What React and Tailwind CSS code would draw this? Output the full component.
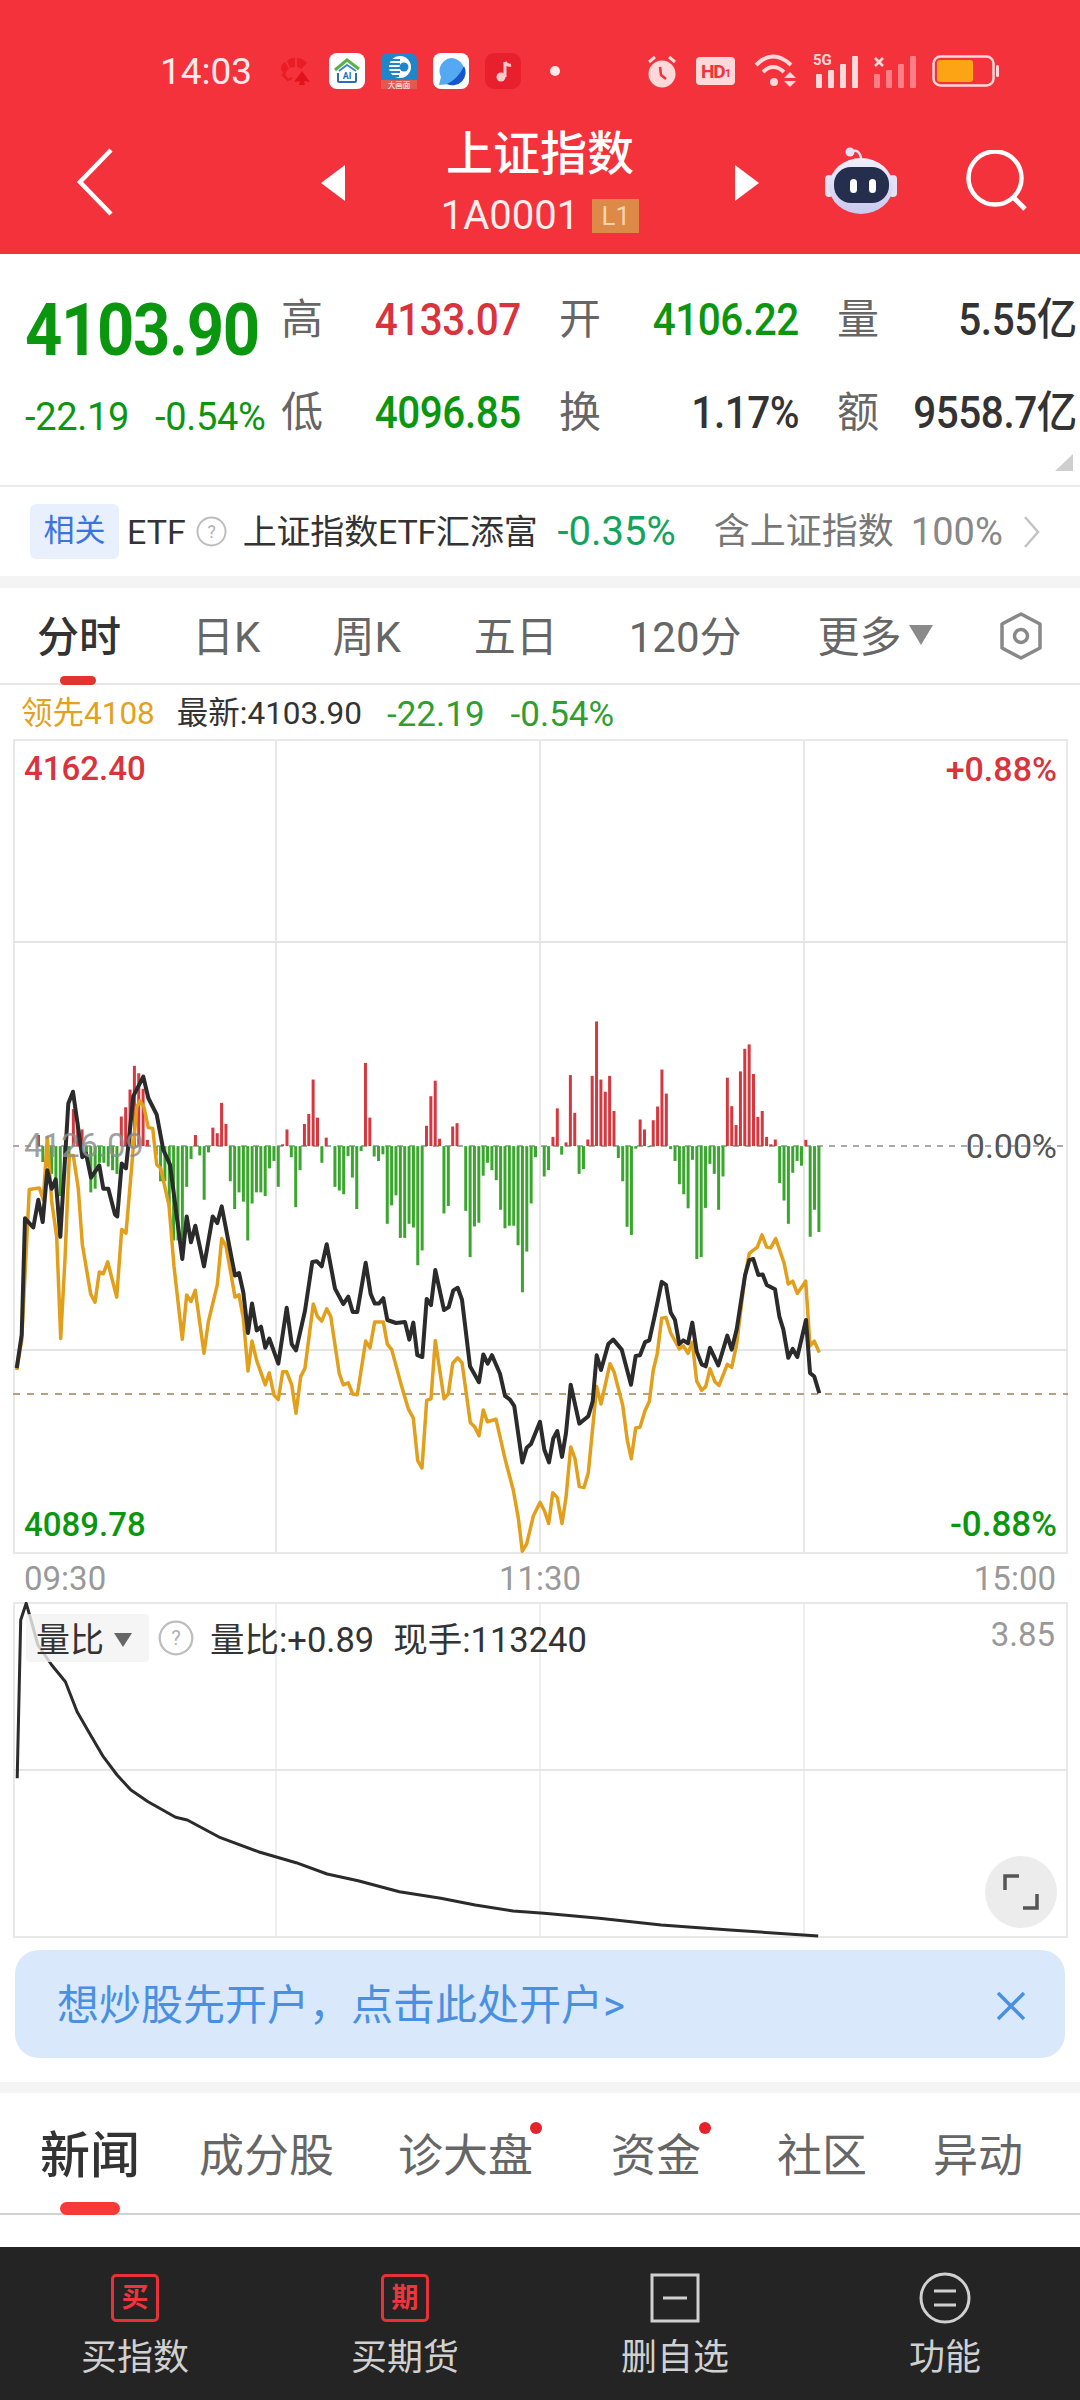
import React from "react";

const black3 = [[50,995],[65,905],[75,590],[100,615],[115,540],[128,600],[142,460],[155,510],[167,485],[181,640],[205,280],[219,248],[247,425],[258,415],[273,480],[298,447],[310,510],[325,510],[345,580],[352,585],[365,442],[378,455],[400,260],[430,207],[445,265],[470,310],[490,405],[510,445],[547,700],[560,585],[573,655],[586,610],[612,720],[638,585],[652,603],[665,558],[705,745],[717,738],[730,790],[744,900],[756,820],[770,893],[783,883],[796,940],[808,915],[835,983],[860,832],[875,930],[888,947],[915,840],[937,708],[950,706],[965,720],[980,660],[1005,780],[1030,822],[1045,802],[1058,843],[1072,843],[1097,710],[1112,795],[1124,820],[1137,820],[1150,806],[1162,865],[1188,873]];
const black4 = [[15,870],[28,918],[40,872],[52,960],[67,965],[80,808],[93,825],[106,730],[132,838],[146,830],[160,785],[173,778],[186,810],[210,990],[237,1033],[250,958],[263,983],[276,960],[300,1010],[315,1070],[330,1080],[343,1098],[367,1250],[380,1210],[393,1200],[420,1140],[433,1215],[447,1250],[460,1185],[472,1165],[486,1235],[498,1170],[512,1040],[538,1145],[565,1125],[578,1085],[590,960],[603,1000],[625,930],[640,918],[665,945],[693,1040],[707,962],[720,960],[735,925],[748,920],[765,850],[785,762],[798,770],[812,845],[825,865],[838,930],[850,920],[864,928],[877,872],[890,950],[905,985],[917,990],[930,940],[955,988],[982,907],[995,945],[1010,890],[1035,745],[1048,703],[1060,700],[1075,743],[1088,742],[1100,770],[1125,782],[1138,855],[1150,890],[1165,967],[1178,943],[1192,965],[1218,865],[1230,1008],[1243,1018],[1258,1063]];
const orange3 = [[50,1000],[65,920],[88,512],[118,508],[130,540],[142,372],[155,545],[170,640],[182,915],[195,700],[208,420],[220,420],[235,510],[247,660],[272,795],[285,817],[298,735],[310,740],[323,708],[350,803],[365,620],[378,630],[395,450],[410,290],[420,272],[432,290],[445,345],[458,347],[470,445],[482,455],[507,555],[522,720],[547,917],[560,797],[573,815],[586,785],[612,955],[625,870],[652,770],[665,645],[678,665],[705,803],[717,797],[730,860],[744,1003],[756,922],[770,975],[796,1040],[808,1008],[822,1068],[835,1080],[848,1005],[860,1005],[875,1040],[888,1117],[902,1018],[915,995],[940,822],[952,855],[965,868],[980,835],[992,855],[1018,1010],[1030,1040],[1045,1035],[1058,1065],[1072,1067],[1097,922],[1110,940],[1124,870],[1150,870],[1162,930],[1175,945]];
const orange4 = [[5,1045],[25,1105],[40,1130],[53,1245],[66,1265],[80,1082],[93,1078],[106,920],[132,1078],[145,1065],[158,982],[173,967],[186,980],[211,1142],[225,1155],[237,1178],[250,1108],[262,1140],[288,1133],[315,1240],[340,1325],[355,1400],[367,1490],[380,1470],[400,1395],[420,1358],[433,1380],[446,1415],[458,1332],[472,1345],[486,1415],[498,1345],[512,1208],[525,1240],[538,1315],[552,1318],[565,1278],[590,1045],[603,1092],[630,983],[642,1005],[668,1095],[682,1190],[694,1240],[707,1157],[720,1155],[735,1110],[748,1085],[760,1000],[772,955],[785,860],[798,858],[812,900],[838,943],[850,935],[864,955],[877,925],[890,1030],[905,1055],[917,1045],[930,997],[945,1032],[957,1042],[982,985],[995,993],[1010,930],[1035,745],[1048,685],[1072,668],[1086,635],[1100,668],[1112,670],[1127,645],[1152,710],[1165,768],[1178,760],[1192,793],[1217,760],[1230,935],[1243,922],[1258,953]];
const barTops = [395,395,395,395,395,365,438,450,470,500,530,470,430,295,330,350,420,520,510,440,440,450,460,470,315,290,242,178,198,240,378,395,420,490,490,560,650,650,650,505,430,365,420,540,412,345,360,278,335,490,565,520,545,650,550,520,520,530,455,435,505,390,350,425,560,460,335,308,215,318,440,372,395,505,515,525,422,480,565,408,170,318,423,435,417,605,555,528,643,643,605,615,717,677,340,260,218,375,577,557,342,333,395,570,695,612,602,475,440,460,487,567,617,610,610,663,790,680,550,425,395,477,460,370,293,418,385,203,305,470,457,377,205,58,215,248,205,300,427,490,613,635,402,323,350,398,325,288,188,253,403,435,498,525,563,432,700,695,562,443,470,567,477,210,287,338,193,132,120,200,316,300,370,390,377,495,542,605,467,435,448,378,640,567,627];
const curve = [[25,625],[30,150],[38,100],[45,150],[55,225],[75,285],[95,335],[112,425],[130,490],[150,560],[170,615],[190,660],[215,695],[255,742],[272,750],[320,803],[375,845],[400,860],[430,878],[475,912],[520,932],[580,965],[640,985],[690,1005],[745,1023],[790,1030],[870,1045],[960,1065],[1060,1080],[1188,1098]];

const yz = (z) => 1000 + z / 2.703;
const pts = (a3, a4) =>
  [...a3.map(([x, y]) => `${(x / 3).toFixed(1)},${yz(y).toFixed(1)}`), ...a4.map(([x, y]) => `${(400 + x / 3).toFixed(1)},${yz(y).toFixed(1)}`)].join(" ");
const curvePts = curve.map(([x, y]) => `${(x / 1.452).toFixed(1)},${(1570 + y / 3).toFixed(1)}`).join(" ");

function MainChartSvg() {
  return (
    <svg className="absolute left-[-2px] top-[-2px]" width="1055" height="815" viewBox="13 739 1055 815" fill="none">
      {[276, 540, 804].map((x) => <line key={x} x1={x} x2={x} y1="739" y2="1553" stroke="#e8e8e8" strokeWidth="2" />)}
      {[942, 1350].map((y) => <line key={y} x1="13" x2="1068" y1={y} y2={y} stroke="#e4e4e4" strokeWidth="2" />)}
      <line x1="13" x2="1068" y1="1146" y2="1146" stroke="#aaaaaa" strokeWidth="2" strokeDasharray="6 6" />
      <line x1="13" x2="1068" y1="1394" y2="1394" stroke="#b5a27c" strokeWidth="2" strokeDasharray="7 7" />
      {barTops.map((t, i) => {
        const x = (50 + 13.08 * i) / 3;
        const up = t < 395;
        if (t === 395) return null;
        const top = yz(Math.min(t, 395));
        const bot = yz(Math.max(t, 395));
        return <rect key={i} x={x - 1.5} y={top} width="3" height={bot - top} fill={up ? "#d5383f" : "#3ba62e"} />;
      })}
      <polyline points={pts(orange3, orange4)} stroke="#e29f1c" strokeWidth="3.5" strokeLinejoin="round" />
      <polyline points={pts(black3, black4)} stroke="#2b2b2b" strokeWidth="4" strokeLinejoin="round" />
    </svg>
  );
}

function SubChartSvg() {
  return (
    <svg className="absolute left-[-2px] top-[-2px]" width="1055" height="336" viewBox="13 1602 1055 336" fill="none">
      {[276, 540, 804].map((x) => <line key={x} x1={x} x2={x} y1="1602" y2="1938" stroke="#e8e8e8" strokeWidth="1.5" />)}
      <line x1="13" x2="1068" y1="1770" y2="1770" stroke="#e6e6e6" strokeWidth="2" />
      <polyline points={curvePts} stroke="#2b2b2b" strokeWidth="3" strokeLinejoin="round" />
    </svg>
  );
}

function Poker() {
  return (
    <svg width="34" height="30" viewBox="0 0 34 30" fill="none">
      <path d="M3 14 Q2 9 7 6 L11 13 Q7 15 8 20Z M9 5 Q13 1 17 2 L17 11 Q14 11 12 12Z M19 2 Q25 2 29 7 L23 13 Q21 11 19 11Z" fill="#ea1c24" />
      <path d="M24 15 L32 26 L26 25 L27 29 L21 29 L22 25 L16 26Z" fill="#e4111b" />
      <path d="M4 18 L10 24 L14 22" stroke="#ea1c24" strokeWidth="2.5" />
    </svg>
  );
}
function AiHouse() {
  return (
    <svg width="36" height="36" viewBox="0 0 36 36" fill="none">
      <rect width="36" height="36" rx="8" fill="#fff" />
      <path d="M6 17 L18 7 L30 16" stroke="#5bb04a" strokeWidth="3" />
      <path d="M10 18 L18 12 L27 18" stroke="#3f8ac4" strokeWidth="2" />
      <path d="M9 20 V28 Q9 29 10 29 H26 Q27 29 27 28 V20" stroke="#2a6fb0" strokeWidth="2" />
      <text x="18" y="26" textAnchor="middle" fontSize="9" fontWeight="700" fill="#2a6fb0">AI</text>
    </svg>
  );
}
function BlueApp() {
  return (
    <svg width="36" height="36" viewBox="0 0 36 36" fill="none">
      <rect width="36" height="36" rx="7" fill="#1f86cc" />
      <circle cx="19" cy="14" r="11" fill="#fff" />
      <path d="M8 7 H19 M8 11 H19 M8 15 H19 M8 19 H19 M10 23 H18" stroke="#1f86cc" strokeWidth="2" />
      <circle cx="23" cy="14" r="4.5" fill="#1f86cc" />
      <rect x="0" y="27" width="36" height="9" fill="#e4584f" />
      <text x="18" y="35" textAnchor="middle" fontSize="7.5" fill="#fff">大画面</text>
    </svg>
  );
}
function Planet() {
  return (
    <svg width="36" height="36" viewBox="0 0 36 36" fill="none">
      <rect width="36" height="36" rx="8" fill="#fff" />
      <path d="M18 5 A13 13 0 0 1 31 18 A13 13 0 0 1 18 31 L6 32 L8 24 A13 13 0 0 1 18 5Z" fill="#55a8f2" />
      <path d="M31 13 A13 13 0 0 1 14 31 Q25 26 31 13Z" fill="#1556cc" />
    </svg>
  );
}
function MusicApp() {
  return (
    <svg width="36" height="36" viewBox="0 0 36 36" fill="none">
      <rect width="36" height="36" rx="9" fill="#e8202e" />
      <path d="M20 9 V24" stroke="#ffc9cb" strokeWidth="3" />
      <path d="M20 9 Q22 13 26 12" stroke="#ffc9cb" strokeWidth="3" />
      <circle cx="16" cy="24" r="4.5" fill="#ffc9cb" />
    </svg>
  );
}
function Alarm() {
  return (
    <svg width="34" height="34" viewBox="0 0 34 34" fill="none">
      <circle cx="17" cy="20" r="13.5" fill="#ffd9da" />
      <path d="M4 8 L10 3 M30 8 L24 3" stroke="#ffd9da" strokeWidth="3" />
      <path d="M15 13 L16 21 L21 25" stroke="#f3323b" strokeWidth="2.5" />
    </svg>
  );
}
function Hd() {
  return (
    <div className="flex h-[28px] w-[39px] items-center justify-center rounded-[4px] bg-[#ffd9da] text-[19px] font-bold leading-none tracking-[-1px] text-[#f3323b]">
      HD<span className="mt-[5px] text-[11px]">1</span>
    </div>
  );
}
function Wifi() {
  return (
    <svg width="46" height="34" viewBox="0 0 46 34" fill="none">
      <path d="M2 11 Q19 -6 37 11" stroke="#ffd9da" strokeWidth="4" />
      <path d="M9 18 Q19 8 30 18" stroke="#ffd9da" strokeWidth="4" />
      <circle cx="20" cy="28" r="4" fill="#ffd9da" />
      <path d="M30 24 L36 18 L42 24Z M30 27 L42 27 L36 33Z" fill="#ffd9da" />
    </svg>
  );
}
function Signal5G() {
  return (
    <div className="relative h-[34px] w-[47px]">
      <span className="absolute left-0 top-[-1px] text-[15px] font-bold leading-none text-[#ffd9da]">5G</span>
      <svg className="absolute left-0 top-0" width="47" height="34" viewBox="0 0 47 34" fill="#ffd9da">
        <rect x="3" y="20" width="6" height="14" rx="1" />
        <rect x="15" y="16" width="6" height="18" rx="1" />
        <rect x="27" y="10" width="6" height="24" rx="1" />
        <rect x="39" y="2" width="6" height="32" rx="1" />
      </svg>
    </div>
  );
}
function SignalX() {
  return (
    <svg width="44" height="34" viewBox="0 0 44 34" fill="#ff7f85">
      <path d="M2 4 L10 12 M10 4 L2 12" stroke="#ffd9da" strokeWidth="2.6" />
      <rect x="1" y="20" width="6" height="14" rx="1" />
      <rect x="13" y="16" width="6" height="18" rx="1" />
      <rect x="25" y="10" width="6" height="24" rx="1" />
      <rect x="37" y="2" width="6" height="32" rx="1" />
    </svg>
  );
}
function Battery() {
  return (
    <svg width="68" height="32" viewBox="0 0 68 32" fill="none">
      <rect x="1.5" y="1.5" width="60" height="29" rx="7" stroke="#ffd9da" strokeWidth="2.5" />
      <rect x="5" y="5" width="36" height="22" rx="3" fill="#fca514" />
      <rect x="64" y="10" width="3" height="12" rx="1.5" fill="#ffd9da" />
    </svg>
  );
}
function Robot() {
  return (
    <svg width="74" height="68" viewBox="0 0 74 68" fill="none">
      <defs>
        <linearGradient id="rb" x1="0" y1="0" x2="0" y2="1"><stop offset="0" stopColor="#f0effa" /><stop offset="1" stopColor="#c9c9f0" /></linearGradient>
      </defs>
      <path d="M26 5 Q34 1 36 11" stroke="#e5e4f6" strokeWidth="2.5" />
      <circle cx="25" cy="5" r="4.5" fill="#e5e4f6" />
      <rect x="0" y="28" width="8" height="22" rx="4" fill="#e3e2f5" />
      <rect x="64" y="28" width="8" height="22" rx="4" fill="#e3e2f5" />
      <ellipse cx="36" cy="39" rx="32" ry="28" fill="url(#rb)" />
      <rect x="9" y="20" width="55" height="36" rx="17" fill="#252f4d" />
      <rect x="25" y="32" width="7" height="14" rx="3.5" fill="#fff" />
      <rect x="44" y="32" width="7" height="14" rx="3.5" fill="#fff" />
    </svg>
  );
}

function QMark({ size = 31 }) {
  return (
    <svg width={size} height={size} viewBox="0 0 32 32" fill="none">
      <circle cx="16" cy="16" r="14.5" stroke="#bdbdbd" strokeWidth="2" />
      <text x="16" y="22.5" textAnchor="middle" fontSize="18" fill="#b0b0b0">?</text>
    </svg>
  );
}

const Label = ({ children }) => <span className="text-[42px] leading-[46px] text-[#666]">{children}</span>;
const Val = ({ c, children }) => <span className={`origin-right scale-x-[0.92] whitespace-nowrap text-[44px] font-medium leading-[46px] tracking-[-0.5px] ${c}`}>{children}</span>;
const Cell = ({ l, v, c }) => (
  <div className="flex h-[46px] items-center justify-between">
    <Label>{l}</Label>
    <Val c={c}>{v}</Val>
  </div>
);

const GREEN = "text-[#0b960f]";
const RED = "text-[#d9333b]";
const DARK = "text-[#333333]";

function BottomItem({ icon, label }) {
  return (
    <div className="flex w-[270px] flex-col items-center">
      <div className="flex h-[52px] items-center justify-center">{icon}</div>
      <span className="mt-[12px] text-[36px] leading-[44px] text-[#d0d0d0]">{label}</span>
    </div>
  );
}

export default function App() {
  return (
    <div className="flex h-[2400px] w-[1080px] flex-col overflow-hidden bg-white [font-family:Roboto,'Noto_Sans_CJK_SC',sans-serif]">
      {/* header */}
      <div className="h-[254px] shrink-0 bg-[#f3323b]">
        <div className="mt-[53px] flex h-[36px] items-center pl-[160px]">
          <span className="w-[118px] text-[37px] leading-none text-[#ffe9ea]">14:03</span>
          <Poker />
          <div className="ml-[17px]"><AiHouse /></div>
          <div className="ml-[16px]"><BlueApp /></div>
          <div className="ml-[16px]"><Planet /></div>
          <div className="ml-[16px]"><MusicApp /></div>
          <div className="ml-[29px] h-[10px] w-[10px] rounded-full bg-[#ffe9ea]" />
          <div className="ml-[85px]"><Alarm /></div>
          <div className="ml-[17px]"><Hd /></div>
          <div className="ml-[19px]"><Wifi /></div>
          <div className="ml-[13px]"><Signal5G /></div>
          <div className="ml-[13px]"><SignalX /></div>
          <div className="ml-[15px]"><Battery /></div>
        </div>
        <div className="mt-[33px] flex h-[125px] items-start pl-[75px]">
          <svg className="mt-[26px]" width="40" height="68" viewBox="0 0 40 68" fill="none">
            <path d="M36 2 L5 34 L36 66" stroke="#fff" strokeWidth="4.5" />
          </svg>
          <svg className="ml-[206px] mt-[43px]" width="24" height="36" viewBox="0 0 24 36"><path d="M24 0 V36 L0 18Z" fill="#fff" /></svg>
          <div className="ml-[88px] mt-[4px] flex w-[214px] flex-col items-center">
            <span className="whitespace-nowrap text-[47px] font-medium leading-[56px] text-white">上证指数</span>
            <div className="mt-[12px] flex items-center">
              <span className="text-[40px] leading-[44px] text-[#ffeeee]">1A0001</span>
              <span className="ml-[13px] flex h-[34px] w-[47px] items-center justify-center bg-[#dd8a48] text-[26px] leading-none text-[#f9d3ac]">L1</span>
            </div>
          </div>
          <svg className="ml-[88px] mt-[43px]" width="24" height="36" viewBox="0 0 24 36"><path d="M0 0 V36 L24 18Z" fill="#fff" /></svg>
          <div className="ml-[66px] mt-[25px]"><Robot /></div>
          <svg className="ml-[67px] mt-[28px]" width="62" height="62" viewBox="0 0 62 62" fill="none">
            <circle cx="29" cy="28" r="26.5" stroke="#fff" strokeWidth="4.5" />
            <path d="M47 47 L59 59" stroke="#fff" strokeWidth="5" />
          </svg>
        </div>
      </div>

      {/* stats */}
      <div className="relative flex h-[233px] shrink-0 border-b-2 border-[#ebebeb] pt-[41px]">
        <div className="w-[281px] shrink-0 pl-[25px]">
          <div className={`origin-left scale-x-[0.905] whitespace-nowrap text-[72px] font-bold leading-[72px] tracking-[-1.5px] ${GREEN}`}>4103.90</div>
          <div className={`mt-[30px] flex h-[40px] items-center whitespace-nowrap text-[38px] leading-none tracking-[-0.3px] ${GREEN}`}>
            <span className="w-[130px]">-22.19</span>
            <span>-0.54%</span>
          </div>
        </div>
        <div className="mt-[2px] grid grid-cols-[240px_240px_240px] gap-x-[38px] gap-y-[47px] self-start">
          <Cell l="高" v="4133.07" c={RED} />
          <Cell l="开" v="4106.22" c={GREEN} />
          <Cell l="量" v="5.55亿" c={DARK} />
          <Cell l="低" v="4096.85" c={GREEN} />
          <Cell l="换" v="1.17%" c={DARK} />
          <Cell l="额" v="9558.7亿" c={DARK} />
        </div>
        <svg className="absolute bottom-[14px] right-[7px]" width="18" height="17" viewBox="0 0 18 17"><path d="M18 0 V17 H0Z" fill="#cfcfcf" /></svg>
      </div>

      {/* ETF row */}
      <div className="flex h-[89px] shrink-0 items-center whitespace-nowrap pl-[30px]">
        <span className="flex h-[55px] w-[89px] items-center justify-center rounded-[6px] bg-[#e8f0fd] text-[31px] text-[#3d72e2]">相关</span>
        <span className="ml-[8px] text-[34px] leading-none text-[#333]">ETF</span>
        <div className="ml-[10px]"><QMark /></div>
        <span className="ml-[16px] text-[34px] leading-none tracking-[-0.2px] text-[#333]">上证指数ETF汇添富</span>
        <span className="ml-[20px] text-[40px] leading-none text-[#12a35c]">-0.35%</span>
        <span className="ml-[38px] text-[36px] leading-none text-[#777]">含上证指数</span>
        <span className="ml-[17px] text-[38px] leading-none text-[#888]">100%</span>
        <svg className="ml-[20px]" width="18" height="34" viewBox="0 0 18 34" fill="none"><path d="M2 2 L15 17 L2 32" stroke="#c4c4c4" strokeWidth="2.5" /></svg>
      </div>
      <div className="h-[12px] shrink-0 bg-[#f4f4f4]" />

      {/* period tabs */}
      <div className="relative flex h-[97px] shrink-0 items-center whitespace-nowrap border-b-2 border-[#e6e6e6] pl-[37px] pt-[4px] text-[42px] leading-none text-[#666]">
        <span className="font-medium text-[#333]">分时</span>
        <span className="ml-[71px]">日K</span>
        <span className="ml-[72px]">周K</span>
        <span className="ml-[73px]">五日</span>
        <span className="ml-[71px]">120分</span>
        <span className="ml-[76px]">更多</span>
        <svg className="mb-[6px] ml-[7px]" width="24" height="24" viewBox="0 0 24 24"><path d="M0 2 H24 L12 22Z" fill="#8a8a8a" /></svg>
        <svg className="mb-[4px] ml-[64px]" width="48" height="48" viewBox="0 0 48 48" fill="none">
          <path d="M24 2 L43 12 V36 L24 46 L5 36 V12Z" stroke="#888" strokeWidth="3.5" strokeLinejoin="round" />
          <circle cx="24" cy="24" r="6.5" stroke="#888" strokeWidth="3.5" />
        </svg>
        <div className="absolute bottom-[-2px] left-[60px] h-[9px] w-[36px] rounded-full bg-[#e23232]" />
      </div>

      {/* legend */}
      <div className="flex h-[54px] shrink-0 items-center whitespace-nowrap pl-[21px] pt-[4px] text-[31.5px] leading-none">
        <span className="text-[#e4a11c]">领先4108</span>
        <span className="ml-[22px] text-[#333]">最新:4103.90</span>
        <span className="ml-[25px] text-[35px] text-[#2f9e2f]">-22.19</span>
        <span className="ml-[26px] text-[35px] text-[#2f9e2f]">-0.54%</span>
      </div>

      {/* main chart */}
      <div className="relative ml-[13px] h-[815px] w-[1055px] shrink-0 border-2 border-[#e8e8e8]">
        <MainChartSvg />
        <div className="relative flex h-full flex-col justify-between px-[9px] pb-[8px] pt-[9px] text-[33px] font-medium leading-[38px]">
          <div className="flex justify-between text-[#d9333b]"><span>4162.40</span><span className="text-[34px]">+0.88%</span></div>
          <div className="mb-[3px] flex justify-between"><span className="font-normal text-[#8e8e8e]/85">4126.09</span><span className="text-[34px] font-normal text-[#555]">0.00%</span></div>
          <div className="flex justify-between text-[#0b960f]"><span>4089.78</span><span className="text-[35px]">-0.88%</span></div>
        </div>
      </div>
      <div className="flex h-[48px] shrink-0 items-center justify-between px-[24px] text-[33px] leading-none text-[#999]">
        <span>09:30</span><span>11:30</span><span>15:00</span>
      </div>

      {/* sub chart */}
      <div className="relative ml-[13px] h-[336px] w-[1055px] shrink-0 border-2 border-[#e8e8e8]">
        <SubChartSvg />
        <div className="relative flex items-start whitespace-nowrap pl-[11px] pt-[10px]">
          <div className="flex h-[48px] w-[123px] items-center rounded-[4px] bg-[#f2f2f2]/80 pl-[10px] pt-[3px]">
            <span className="text-[34px] leading-none text-[#333]">量比</span>
            <svg className="ml-[10px]" width="18" height="16" viewBox="0 0 18 16"><path d="M0 1 H18 L9 15Z" fill="#666" /></svg>
          </div>
          <div className="ml-[9px] mt-[6px]"><QMark size={36} /></div>
          <span className="ml-[16px] mt-[8px] text-[34.5px] leading-[36px] text-[#333]">量比:+0.89</span>
          <span className="ml-[19px] mt-[8px] text-[34.5px] leading-[36px] text-[#333]">现手:113240</span>
          <span className="ml-auto mr-[11px] mt-[3px] text-[33px] leading-[36px] text-[#999]">3.85</span>
        </div>
        <div className="absolute bottom-[8px] right-[9px] flex h-[72px] w-[72px] items-center justify-center rounded-full bg-[#ececec]">
          <svg width="36" height="36" viewBox="0 0 36 36" fill="none">
            <path d="M2 16 V2 H16 M34 20 V34 H20" stroke="#555" strokeWidth="3.5" />
          </svg>
        </div>
      </div>

      {/* banner */}
      <div className="mx-[15px] mt-[12px] flex h-[108px] shrink-0 items-center justify-between rounded-[24px] bg-[#d9e8fb] pl-[42px] pr-[39px] pt-[4px]">
        <span className="text-[42px] leading-none text-[#4a90e2]">想炒股先开户，点击此处开户&gt;</span>
        <svg width="30" height="30" viewBox="0 0 30 30" fill="none"><path d="M2 2 L28 28 M28 2 L2 28" stroke="#4a90e2" strokeWidth="3.5" /></svg>
      </div>
      <div className="mt-[24px] h-[11px] shrink-0 bg-[#f4f4f4]" />

      {/* news tabs */}
      <div className="relative flex h-[122px] shrink-0 items-center whitespace-nowrap border-b-2 border-[#d2d2d2] pl-[40px] pt-[6px] text-[45px] leading-none text-[#666]">
        <span className="text-[50px] font-medium text-[#333]">新闻</span>
        <span className="ml-[59px]">成分股</span>
        <span className="relative ml-[64px]">诊大盘<i className="absolute right-[-9px] top-[-12px] h-[12px] w-[12px] rounded-full bg-[#e5232b]" /></span>
        <span className="relative ml-[78px]">资金<i className="absolute right-[-10px] top-[-12px] h-[12px] w-[12px] rounded-full bg-[#e5232b]" /></span>
        <span className="ml-[76px]">社区</span>
        <span className="ml-[66px]">异动</span>
        <div className="absolute bottom-[-2px] left-[60px] h-[13px] w-[60px] rounded-full bg-[#f53a38]" />
      </div>
      <div className="h-[32px] shrink-0" />

      {/* bottom bar */}
      <div className="flex h-[153px] shrink-0 bg-[#242424] pt-[25px]">
        <BottomItem
          label="买指数"
          icon={
            <div className="flex h-[48px] w-[48px] items-center justify-center rounded-[5px] border-[3px] border-[#e8303a] text-[27px] font-bold leading-none text-[#f0333d]">买</div>
          }
        />
        <BottomItem
          label="买期货"
          icon={
            <div className="flex h-[48px] w-[48px] items-center justify-center rounded-[5px] border-[3px] border-[#e8303a] text-[27px] font-bold leading-none text-[#f0333d]">期</div>
          }
        />
        <BottomItem
          label="删自选"
          icon={
            <svg width="50" height="50" viewBox="0 0 50 50" fill="none">
              <rect x="2" y="2" width="46" height="46" stroke="#d0d0d0" strokeWidth="3" />
              <path d="M13 25 H37" stroke="#d0d0d0" strokeWidth="3" />
            </svg>
          }
        />
        <BottomItem
          label="功能"
          icon={
            <svg width="52" height="52" viewBox="0 0 52 52" fill="none">
              <circle cx="26" cy="26" r="24" stroke="#d0d0d0" strokeWidth="3" />
              <path d="M15 19 H37 M15 33 H37" stroke="#d0d0d0" strokeWidth="3" />
            </svg>
          }
        />
      </div>
    </div>
  );
}
